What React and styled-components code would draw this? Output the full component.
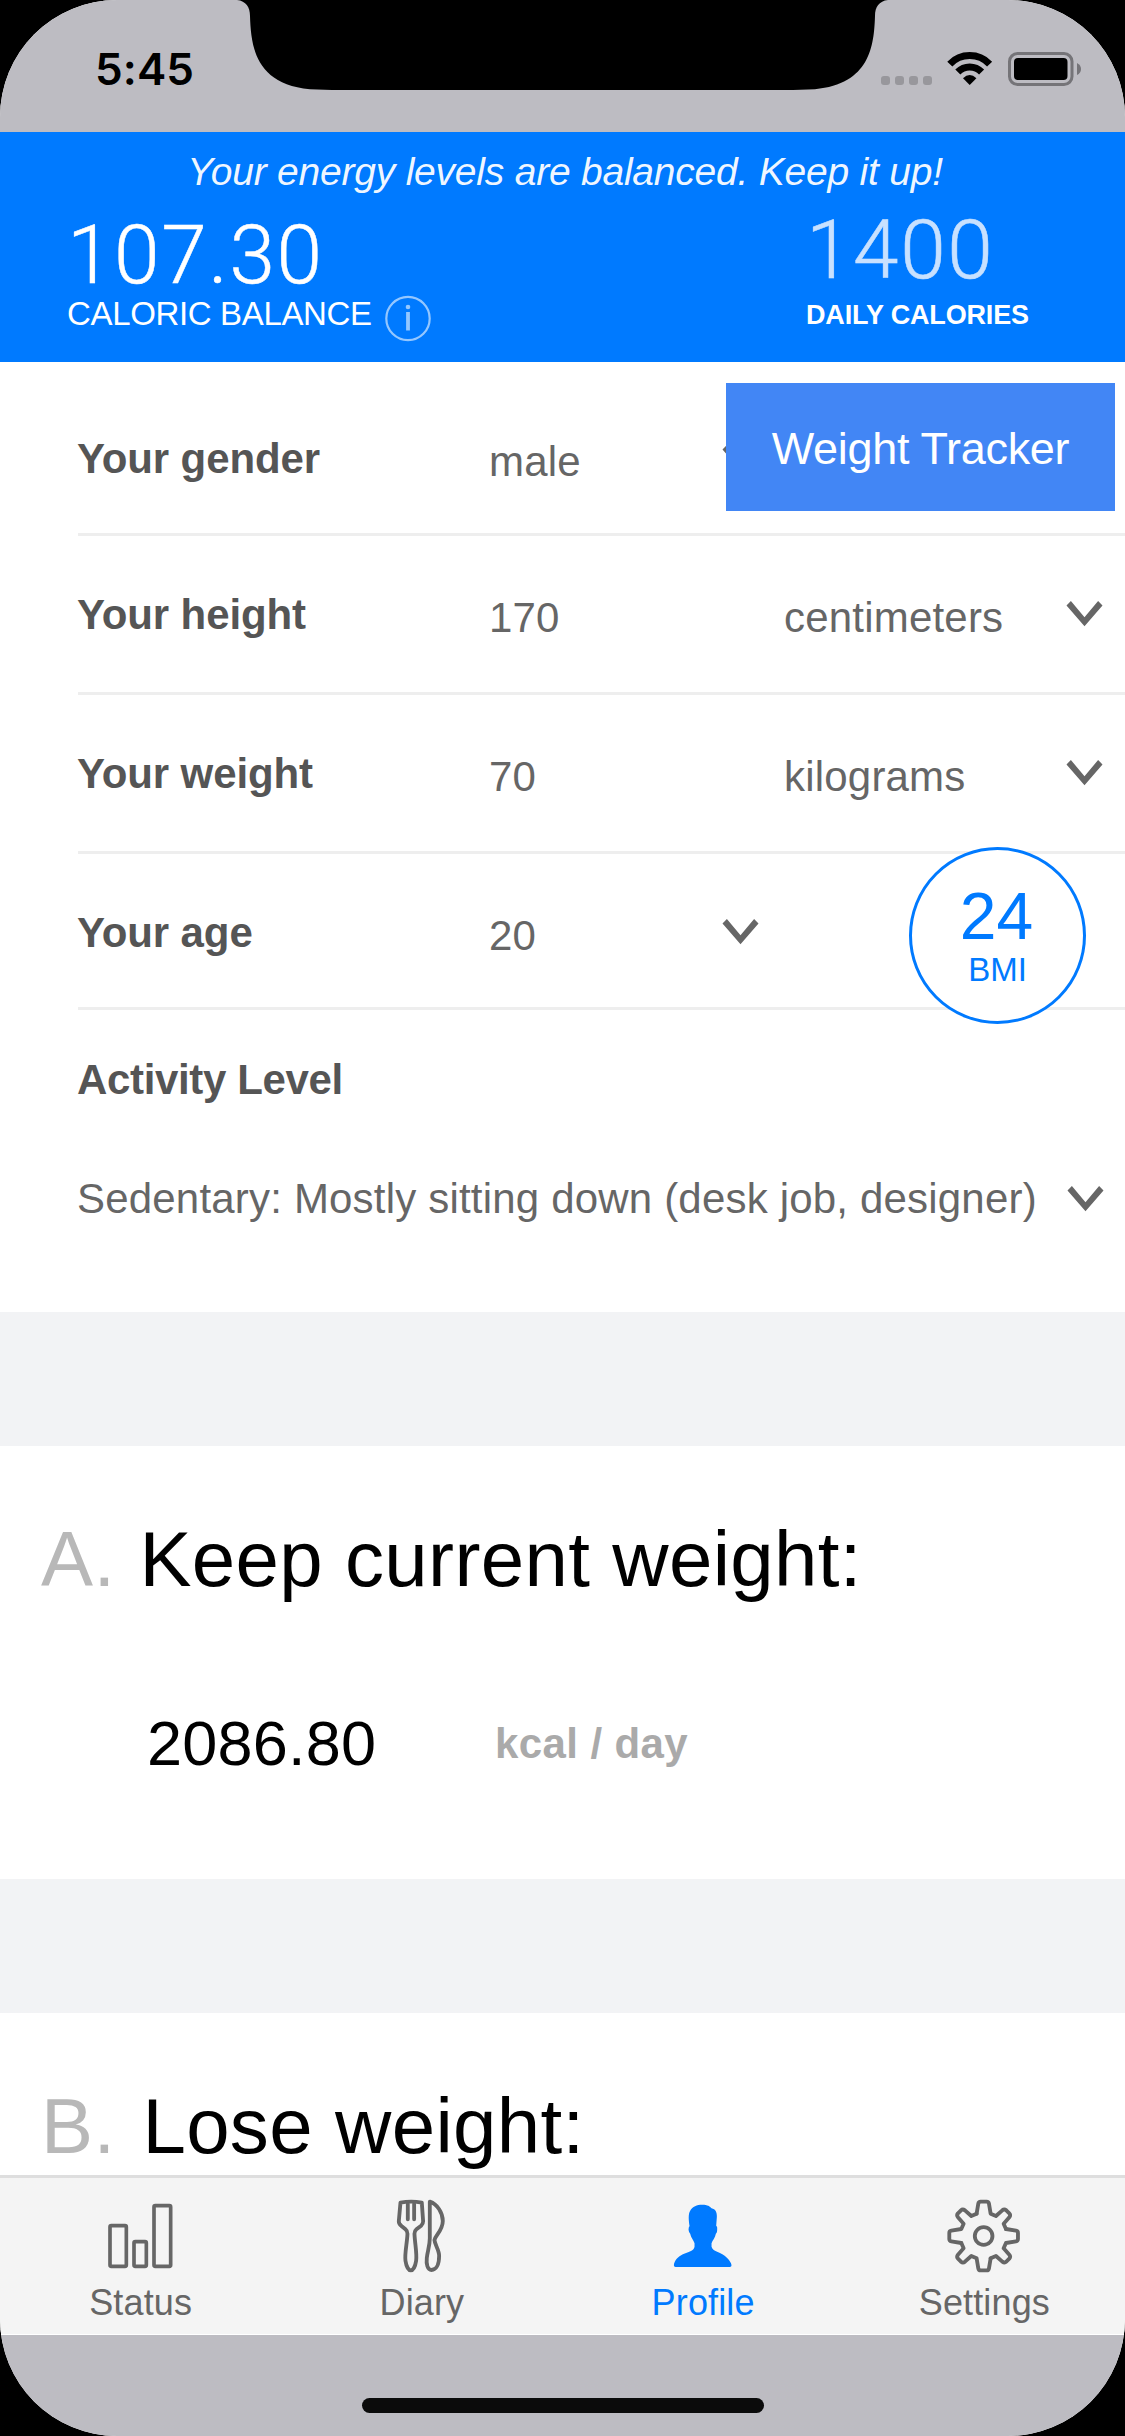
import React from 'react';
import styled, { createGlobalStyle, css } from 'styled-components';

const GlobalStyle = createGlobalStyle`
  html, body { margin: 0; padding: 0; background: #000; }
  * { box-sizing: border-box; }
  svg { display: block; flex: none; }
`;

const BLUE = '#007aff';
const CHROME = '#bdbcc2';

const Screen = styled.div`
  position: relative;
  display: flex;
  flex-direction: column;
  width: 1125px;
  height: 2436px;
  overflow: hidden;
  border-radius: 117px;
  background: #fff;
  font-family: 'Liberation Sans', Arial, sans-serif;
  white-space: nowrap;
`;

const StatusBar = styled.div`
  display: flex;
  flex: none;
  justify-content: space-between;
  height: 132px;
  padding: 42px 43px 0 95px;
  background: ${CHROME};
`;

const Clock = styled.div`
  font: 600 44px/54px Inter, sans-serif;
  letter-spacing: 0.1px;
  color: #000;
`;

const StatusIcons = styled.div`
  display: flex;
  align-items: flex-start;
  padding-top: 10px;
`;

const Signal = styled.div`
  display: flex;
  gap: 5px;
  padding-top: 24px;
  margin-right: 15px;
`;

const Dot = styled.i`
  width: 9px;
  height: 9px;
  border-radius: 3px;
  background: #98979c;
`;

const Notch = styled.svg`
  position: absolute;
  top: 0;
  left: 232px;
`;

const Header = styled.header`
  flex: none;
  height: 230px;
  padding-top: 18px;
  background: ${BLUE};
  color: #fff;
`;

const Message = styled.p`
  margin: 0 0 16px;
  padding-left: 5px;
  text-align: center;
  font-size: 39px;
  line-height: 43px;
  font-style: italic;
  letter-spacing: -0.22px;
  color: rgba(255, 255, 255, 0.95);
`;

const Stats = styled.div`
  display: grid;
  grid-template-columns: 739px 1fr;
  padding-left: 67px;
`;

const Stat = styled.div`
  padding-top: ${(p) => p.$top}px;
`;

const BigNumber = styled.div`
  margin-bottom: -2px;
  font-family: Roboto, 'Liberation Sans', sans-serif;
  font-weight: 300;
  font-size: 82px;
  line-height: 83px;
  letter-spacing: 1.6px;
  color: ${(p) => p.$color};
  -webkit-text-stroke: 0.5px ${(p) => p.$color};
`;

const Caption = styled.div`
  display: flex;
  align-items: flex-start;
  gap: 12px;
  font-size: 33px;
  line-height: 37px;
  letter-spacing: -0.35px;
  ${(p) =>
    p.$strong &&
    css`
      padding-top: 10px;
      font-size: 27px;
      line-height: 30px;
      font-weight: 700;
      letter-spacing: -0.15px;
    `}
`;

const Form = styled.section`
  position: relative;
  flex: none;
  height: 950px;
  padding: 18px 0 0 78px;
  color: #666;
  font-size: 42px;
  line-height: 47px;
`;

const Row = styled.div`
  display: flex;
  align-items: flex-start;
  height: ${(p) => p.$height}px;
  padding-top: 55px;
  border-bottom: 3px solid #eee;
`;

const Label = styled.div`
  width: 412px;
  margin-left: -1px;
  font-weight: 700;
  letter-spacing: -0.12px;
  color: #555;
`;

const Value = styled.div`
  width: ${(p) => p.$width}px;
  padding-top: 3px;
  letter-spacing: 0.2px;
`;

const ChevronBox = styled.div`
  padding-top: ${(p) => p.$top}px;
`;

const ActivityLabel = styled(Label)`
  padding-top: 46px;
  letter-spacing: -0.35px;
`;

const ActivityRow = styled.div`
  display: flex;
  padding-top: 72px;
`;

const ActivityText = styled.div`
  width: 990px;
  margin-left: -1px;
  letter-spacing: 0.19px;
`;

const TrackerButton = styled.button`
  position: absolute;
  top: 21px;
  right: 10px;
  width: 389px;
  height: 128px;
  padding: 2px 0 0;
  border: 0;
  background: #4286f5;
  color: #fff;
  font: 45px/51px 'Liberation Sans', Arial, sans-serif;
  letter-spacing: -0.3px;
`;

const Bmi = styled.div`
  position: absolute;
  top: 485px;
  right: 39px;
  display: flex;
  flex-direction: column;
  align-items: center;
  width: 177px;
  height: 177px;
  padding-top: 29px;
  border: 3px solid ${BLUE};
  border-radius: 50%;
  background: #fff;
  color: ${BLUE};
  font-size: 33px;
  line-height: 37px;
`;

const BmiValue = styled.div`
  margin-bottom: -2px;
  padding-right: 2px;
  font-size: 66px;
  line-height: 74px;
`;

const Gap = styled.div`
  flex: none;
  height: 134px;
  background: #f2f3f5;
`;

const Plan = styled.section`
  flex: none;
  height: ${(p) => p.$height}px;
  padding-top: 69px;
  overflow: hidden;
`;

const PlanTitle = styled.h2`
  display: flex;
  margin: 0;
  padding-left: 41px;
  font-size: 78px;
  line-height: 88px;
  font-weight: 400;
  color: #000;
  letter-spacing: 0.35px;
`;

const PlanLetter = styled.span`
  padding-right: ${(p) => p.$gap}px;
  color: #b8b8b8;
`;

const PlanAmount = styled.div`
  display: flex;
  align-items: flex-start;
  padding: 105px 0 0 147px;
  font-size: 63px;
  line-height: 70px;
  color: #000;
`;

const Amount = styled.div`
  width: 348px;
  letter-spacing: 0.2px;
`;

const Unit = styled.div`
  padding-top: 12px;
  font-size: 42px;
  line-height: 47px;
  font-weight: 700;
  letter-spacing: 0.4px;
  color: #aaa;
`;

const TabBar = styled.nav`
  display: grid;
  grid-template-columns: repeat(4, 1fr);
  flex: none;
  height: 160px;
  border-top: 3px solid #dedede;
  border-bottom: 1px solid #fff;
  background: #f4f4f4;
`;

const Tab = styled.div`
  display: flex;
  flex-direction: column;
  align-items: center;
  gap: 2px;
  padding-top: 12px;
  font-size: 36px;
  line-height: 41px;
  letter-spacing: 0.15px;
  color: ${(p) => (p.$active ? BLUE : '#666')};
`;

const HomeArea = styled.div`
  display: flex;
  flex: none;
  justify-content: center;
  align-items: flex-start;
  height: 101px;
  padding-top: 63px;
  background: ${CHROME};
`;

const HomeIndicator = styled.div`
  width: 402px;
  height: 15px;
  border-radius: 8px;
  background: #0b0b0b;
`;

const Wifi = () => (
  <svg width="46" height="34" viewBox="0 0 46 34">
    <g fill="none" stroke="#000" strokeWidth="7">
      <path d="M2.8 12.1A27.5 27.5 0 0 1 42.6 12.1" />
      <path d="M10.8 20A16.5 16.5 0 0 1 34.6 20" />
    </g>
    <path d="M22.7 33L16 26.2Q22.7 19.6 29.4 26.2Z" fill="#000" />
  </svg>
);

const BatterySvg = styled.svg`
  margin-left: 15px;
`;

const Battery = () => (
  <BatterySvg width="74" height="34" viewBox="0 0 74 34">
    <rect x="1.5" y="1.5" width="62.5" height="31" rx="8" fill="none" stroke="#757478" strokeWidth="3" />
    <rect x="6" y="6" width="53.5" height="22" rx="4" fill="#000" />
    <path d="M69 11Q73 13 73 17Q73 21 69 23Z" fill="#757478" />
  </BatterySvg>
);

const Info = () => (
  <svg width="48" height="48" viewBox="0 0 48 48" opacity="0.58">
    <circle cx="24" cy="23.5" r="21.7" fill="none" stroke="#fff" strokeWidth="2.2" />
    <circle cx="24" cy="12" r="2.3" fill="#fff" />
    <path d="M24 17V35.5" stroke="#fff" strokeWidth="3.8" />
  </svg>
);

const Chevron = ({ top = 10 }) => (
  <ChevronBox $top={top}>
    <svg width="37" height="26" viewBox="-0.5 0 37 26">
      <path d="M0 4.4L4.4 0L18 16.3L31.6 0L36 4.4L18 25.2Z" fill="#666" />
    </svg>
  </ChevronBox>
);

const StatsIcon = () => (
  <svg width="90" height="90" viewBox="0 0 270 270" fill="none" stroke="currentColor" strokeWidth="11">
    <rect x="42" y="107" width="49" height="122" rx="4" />
    <rect x="114" y="155" width="37" height="74" rx="4" />
    <rect x="174" y="47" width="50" height="182" rx="4" />
  </svg>
);

const DiaryIcon = () => (
  <svg
    width="90"
    height="90"
    viewBox="-9.4 0 270 270"
    fill="none"
    stroke="currentColor"
    strokeWidth="11.5"
    strokeLinejoin="round"
    strokeLinecap="round"
  >
    <path d="M61 38Q93 32 125 38L129 94Q129 102 123 107L109 118Q103 123 103 131C104 160 111 190 108 212C105 232 98 241 92 241C86 241 79 232 76 212C73 190 81 160 82 131Q82 123 76 118L63 107Q56 102 56 94Z" />
    <path d="M83 42V88M102 42V88" />
    <path d="M149 35C172 43 188 68 188 93C188 122 165 136 163 150C164 164 177 180 177 197C177 224 168 240 154 240C142 240 138 222 140 204C142 184 149 168 149 145Z" />
  </svg>
);

const ProfileIcon = () => (
  <svg width="90" height="90" viewBox="9.4 0 270 270" fill="currentColor">
    <path d="M142 44C158 44 166 49 170 55C182 58 186 66 186 80L184 107Q188 110 187 117Q187 129 183 131C181 144 173 150 170 160V170C174 186 200 185 216 203C227 214 230 222 230 226Q230 231 225 231H62Q57 231 57 226C58 212 70 200 84 193C100 185 117 184 119 170V160C116 149 108 143 106 131Q102 128 101 119Q101 112 104 108C101 88 100 72 106 62C113 49 126 44 142 44Z" />
  </svg>
);

const SettingsIcon = () => (
  <svg
    width="90"
    height="90"
    viewBox="4.1 0 270 270"
    fill="none"
    stroke="currentColor"
    strokeWidth="11.5"
    strokeLinejoin="round"
    strokeLinecap="round"
  >
    {[0, 90, 180, 270].map((angle) => (
      <path
        key={angle}
        transform={`rotate(${angle} 138 138)`}
        d="M117 71L122 41Q123 35 129 35H147Q153 35 154 41L159 71L175 78L194 61Q200 56 206 61L215 70Q220 75 215 82L198 101L205 117"
      />
    ))}
    <circle cx="138" cy="138" r="26.5" />
  </svg>
);

const rows = [
  { label: 'Your gender', value: 'male', height: 156 },
  { label: 'Your height', value: '170', unit: 'centimeters', height: 159 },
  { label: 'Your weight', value: '70', unit: 'kilograms', height: 159 },
  { label: 'Your age', value: '20', height: 156 },
];

const tabs = [
  { name: 'Status', Icon: StatsIcon },
  { name: 'Diary', Icon: DiaryIcon },
  { name: 'Profile', Icon: ProfileIcon, active: true },
  { name: 'Settings', Icon: SettingsIcon },
];

export default function App() {
  return (
    <>
      <GlobalStyle />
      <Screen>
        <StatusBar>
          <Clock>5:45</Clock>
          <StatusIcons>
            <Signal>
              <Dot />
              <Dot />
              <Dot />
              <Dot />
            </Signal>
            <Wifi />
            <Battery />
          </StatusIcons>
        </StatusBar>
        <Notch width="661" height="90" viewBox="232 0 661 90">
          <path d="M237 0C246 1 250 7 250 16C251 46 255 84 310 89.2L332 90H793L815 89.2C870 84 874 46 875 16C875 7 879 1 888 0Z" />
        </Notch>

        <Header>
          <Message>Your energy levels are balanced. Keep it up!</Message>
          <Stats>
            <Stat $top={5}>
              <BigNumber $color="#fff">107.30</BigNumber>
              <Caption>
                CALORIC BALANCE
                <Info />
              </Caption>
            </Stat>
            <Stat $top={0}>
              <BigNumber $color="#c8e1ff">1400</BigNumber>
              <Caption $strong>DAILY CALORIES</Caption>
            </Stat>
          </Stats>
        </Header>

        <Form>
          {rows.map(({ label, value, unit, height }) => (
            <Row key={label} $height={height}>
              <Label>{label}</Label>
              <Value $width={unit ? 295 : 233}>{value}</Value>
              {unit && <Value $width={282}>{unit}</Value>}
              <Chevron />
            </Row>
          ))}
          <ActivityLabel>Activity Level</ActivityLabel>
          <ActivityRow>
            <ActivityText>Sedentary: Mostly sitting down (desk job, designer)</ActivityText>
            <Chevron top={11} />
          </ActivityRow>
          <TrackerButton>Weight Tracker</TrackerButton>
          <Bmi>
            <BmiValue>24</BmiValue>
            BMI
          </Bmi>
        </Form>

        <Gap />
        <Plan $height={433}>
          <PlanTitle>
            <PlanLetter $gap={24}>A.</PlanLetter>
            Keep current weight:
          </PlanTitle>
          <PlanAmount>
            <Amount>2086.80</Amount>
            <Unit>kcal / day</Unit>
          </PlanAmount>
        </Plan>
        <Gap />
        <Plan $height={162}>
          <PlanTitle>
            <PlanLetter $gap={27}>B.</PlanLetter>
            Lose weight:
          </PlanTitle>
        </Plan>

        <TabBar>
          {tabs.map(({ name, Icon, active }) => (
            <Tab key={name} $active={active}>
              <Icon />
              {name}
            </Tab>
          ))}
        </TabBar>
        <HomeArea>
          <HomeIndicator />
        </HomeArea>
      </Screen>
    </>
  );
}
